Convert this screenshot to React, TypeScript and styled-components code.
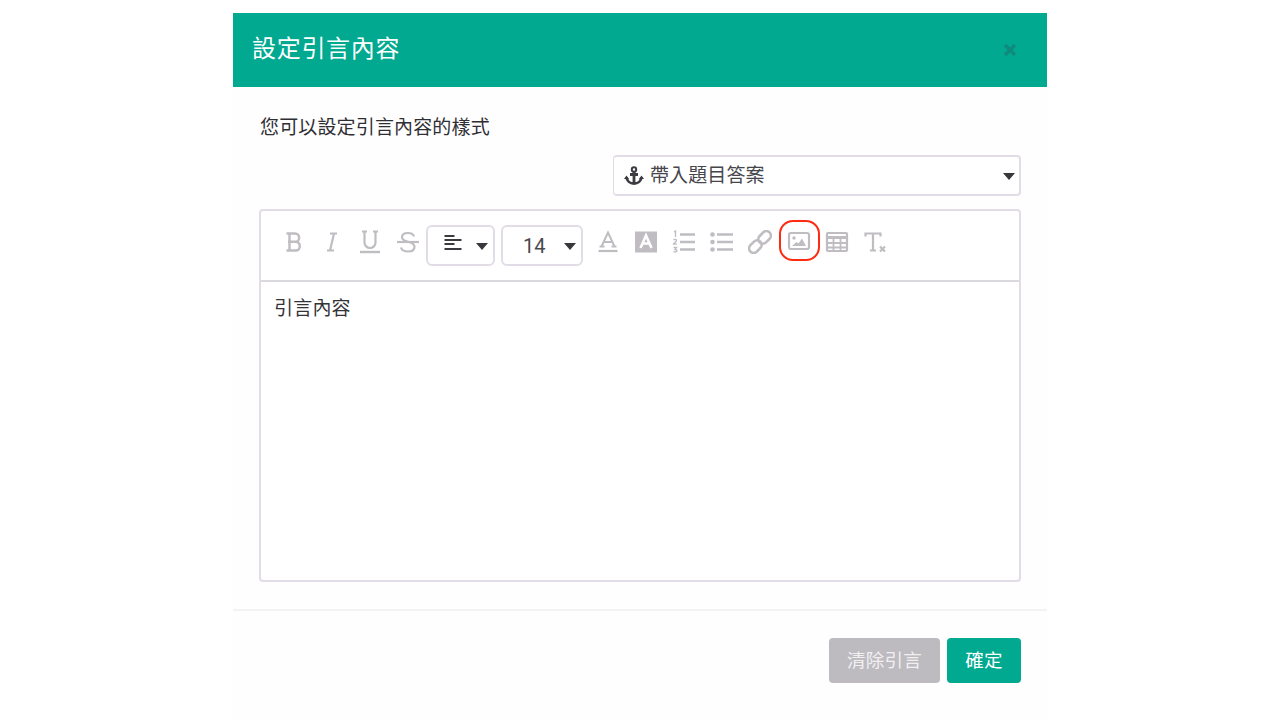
import React from "react";
import styled, { createGlobalStyle } from "styled-components";

const Global = createGlobalStyle`
  html, body { margin: 0; padding: 0; background: #ffffff; }
  body { font-family: Roboto, "Noto Sans CJK TC", sans-serif; }
  * { box-sizing: border-box; }
`;
const Page = styled.div`
  width: 1280px; height: 720px; overflow: hidden; padding-top: 13px;
  display: flex; justify-content: center; align-items: flex-start;
`;
const Modal = styled.div`
  width: 814px; height: 707px; background: #fffeff; display: flex; flex-direction: column;
`;
const Header = styled.div`
  height: 74px; background: #00a98f; flex: none; display: flex; align-items: center;
  justify-content: space-between; padding: 0 30px 2px 19px;
`;
const Title = styled.div`
  color: #fff; font-size: 24px; line-height: 30px; font-weight: 400;
  font-family: Roboto, "Noto Sans CJK TC", sans-serif; letter-spacing: 0.7px;
`;
const CloseIcon = styled.svg`
  width: 14px; height: 14px; margin-top: 2px; display: block;
`;
const Body = styled.div`
  flex: none; height: 524px; padding: 29px 26px 0; display: flex; flex-direction: column;
  border-bottom: 2px solid #f4f2f4;
`;
const Hint = styled.div`
  font-size: 19px; line-height: 24px; color: #2f2f33; height: 24px; letter-spacing: 0.15px;
  padding-left: 1px;
`;
const SelectRow = styled.div`
  display: flex; justify-content: flex-end; margin-top: 15px;
`;
const AnswerSelect = styled.div`
  width: 408px; height: 41px; border: 2px solid #e2dce6; border-left-width: 1px; border-radius: 4px;
  background: #fff; display: flex; align-items: center; padding: 0 4px 0 10px; gap: 6px;
  color: #46464c; font-size: 19px;
`;
const SelectText = styled.span`
  flex: 1; line-height: 24px; letter-spacing: 0.1px;
`;
const Caret = styled.span`
  flex: none; width: 0; height: 0;
  border-left: 6.5px solid transparent; border-right: 6.5px solid transparent;
  border-top: 7px solid #37373c; margin-top: 2px;
`;
const Editor = styled.div`
  margin-top: 13px; width: 762px; height: 373px; border: 2px solid #e2dce6; border-radius: 4px;
  background: #fff; display: flex; flex-direction: column;
`;
const Toolbar = styled.div`
  height: 71px; flex: none; border-bottom: 2px solid #dcd9de; display: flex; align-items: center;
  padding: 0 0 8px 21px;
`;
const ToolIcon = styled.svg<{ $mr?: number }>`
  width: 24px; height: 24px; flex: none; display: block; fill: none; stroke: #bfbcc2;
  margin-right: ${(p) => p.$mr ?? 14}px;
`;
const Dropdown = styled.div<{ $w: number; $mr: number }>`
  width: ${(p) => p.$w}px; height: 41px; margin-right: ${(p) => p.$mr}px; flex: none;
  border: 2px solid #e2dce6; border-radius: 6px; display: flex; align-items: center;
  justify-content: space-between; padding: 0 5px 0 16px; margin-top: 7px; background: #fff;
`;
const AlignIcon = styled.svg`
  width: 18px; height: 18px; display: block; flex: none; margin-bottom: 4px;
`;
const SizeLabel = styled.span`
  font-size: 20px; color: #48484d; margin-left: 4px; line-height: 24px; padding-top: 2px;
`;
const HighlightRing = styled.div`
  width: 41px; height: 41px; border: 2px solid #ff2a12; border-radius: 14px; flex: none;
  display: flex; align-items: center; justify-content: center; margin: 0 5px 2px -7px;
  padding: 0 2px 0 0;
`;
const InnerIcon = styled.svg`
  width: 24px; height: 24px; display: block; fill: none; stroke: #bfbcc2;
`;
const AnchorIcon = styled.svg`
  width: 20px; height: 20px; flex: none; display: block;
`;
const Content = styled.div`
  padding: 15px 13px; font-size: 19px; line-height: 24px; color: #333337; letter-spacing: 0.2px;
`;
const Footer = styled.div`
  flex: 1; display: flex; justify-content: flex-end; align-items: flex-start;
  padding: 27px 26px 0 0; gap: 7px;
`;
const Button = styled.button<{ $muted?: boolean }>`
  height: 45px; border: 0; border-radius: 4px; color: ${(p) => (p.$muted ? "#f1eff2" : "#fff")};
  background: ${(p) => (p.$muted ? "#bdbbbf" : "#00a98f")}; padding: 0 0 3px; font-size: 18.5px;
  font-family: Roboto, "Noto Sans CJK TC", sans-serif; letter-spacing: 0.3px;
  width: ${(p) => (p.$muted ? "111px" : "74px")};
`;

export default function App() {
  return (
    <Page>
      <Global />
      <Modal>
        <Header>
          <Title>設定引言內容</Title>
          <CloseIcon viewBox="0 0 14 14">
            <path d="M2 2l10 10M12 2L2 12" stroke="#108a7c" strokeWidth="3.2" />
          </CloseIcon>
        </Header>
        <Body>
          <Hint>您可以設定引言內容的樣式</Hint>
          <SelectRow>
            <AnswerSelect>
              <AnchorIcon viewBox="0 0 20 20">
                <circle cx="10" cy="3.500" r="2.200" fill="none" stroke="#3c3c42" strokeWidth="2" />
                <path d="M10 5.500v12M6 8.500h8" stroke="#3c3c42" strokeWidth="2.800" fill="none" />
                <path d="M2.500 11c.3 3.800 3.500 6.500 7.500 6.500s7.200-2.700 7.500-6.500" stroke="#3c3c42" strokeWidth="2.800" fill="none" />
                <path d="M0 13l2.500-3.500L5 13zM15 13l2.500-3.500L20 13z" fill="#3c3c42" />
              </AnchorIcon>
              <SelectText>帶入題目答案</SelectText>
              <Caret />
            </AnswerSelect>
          </SelectRow>
          <Editor>
            <Toolbar>
              <ToolIcon viewBox="0 0 24 24" $mr={14}>
                <path d="M6 3.500h7a4 4 0 0 1 0 8.300H6M6 11.800h8a4.400 4.400 0 0 1 0 8.700H6M7.500 3.500v17M4.500 3.500h3M4.500 20.500h3" strokeWidth={2.400} />
              </ToolIcon>
              <ToolIcon viewBox="0 0 24 24" $mr={14}>
                <path d="M10 3.500h7M7 20.500h7M14 3.500l-4 17" strokeWidth={2.200} />
              </ToolIcon>
              <ToolIcon viewBox="0 0 24 24" $mr={14}>
                <path d="M6.500 1.500v11a5.500 5.500 0 0 0 11 0v-11M4 1.500h5M15 1.500h5" strokeWidth={2.200} />
                <path d="M2 22h20" strokeWidth={2.400} />
              </ToolIcon>
              <ToolIcon viewBox="0 0 24 24" $mr={6}>
                <path d="M18 6.500c-.5-2-2.800-3.500-6-3.500-3.500 0-6 1.600-6 4.200 0 2.400 2 3.500 6 4.500 4 1 6.500 2.300 6.500 5 0 3-2.700 4.800-6.500 4.800-3.600 0-6.300-1.500-7-4" strokeWidth={2.200} />
                <path d="M1 12h22" strokeWidth={2.200} />
              </ToolIcon>
              <Dropdown $w={69} $mr={6}>
                <AlignIcon viewBox="0 0 18 18">
                  <path d="M0.500 2h10M0.500 6h17M0.500 10h10M0.500 15h17" stroke="#3a3a3f" strokeWidth="2" />
                </AlignIcon>
                <Caret />
              </Dropdown>
              <Dropdown $w={82} $mr={13}>
                <SizeLabel>14</SizeLabel>
                <Caret />
              </Dropdown>
              <ToolIcon viewBox="0 0 24 24" $mr={14}>
                <path d="M5.500 16.500L12 2.500l6.500 14M7.500 12h9M3.500 16.500h5M15.500 16.500h5" strokeWidth={2} />
                <path d="M2.500 21h19" strokeWidth={2.200} />
              </ToolIcon>
              <ToolIcon viewBox="0 0 24 24" $mr={14}>
                <rect x="1" y="1.500" width="22" height="21" fill="#bfbcc2" stroke="none" />
                <path d="M6.500 18L12 5.500 17.500 18M8.500 13.500h7" stroke="#fff" strokeWidth={2.600} />
              </ToolIcon>
              <ToolIcon viewBox="0 0 24 24" $mr={14}>
                <path d="M8 4.500h15M8 12h15M8 19.500h15" strokeWidth={2.500} />
                <path d="M2 2l1.500-1v6M1.500 10c1-1 3-.8 3 .6 0 1-2.500 2-3 3.400h3.200M1.500 17.500h3l-1.500 2c1.500 0 2 .6 2 1.300 0 1.200-2.300 1.500-3.500.7" strokeWidth={1.300} />
              </ToolIcon>
              <ToolIcon viewBox="0 0 24 24" $mr={14}>
                <path d="M7 4.500h16M7 12h16M7 19.500h16" strokeWidth={2.500} />
                <circle cx="2.500" cy="4.500" r="2.300" fill="#bfbcc2" stroke="none" />
                <circle cx="2.500" cy="12" r="2.300" fill="#bfbcc2" stroke="none" />
                <circle cx="2.500" cy="19.500" r="2.300" fill="#bfbcc2" stroke="none" />
              </ToolIcon>
              <ToolIcon viewBox="0 0 24 24" $mr={14}>
                <g transform="rotate(-45 12 12)" strokeWidth={2.600}>
                  <rect x="-1.500" y="7.500" width="14" height="9" rx="4.500" />
                  <rect x="11.500" y="7.500" width="14" height="9" rx="4.500" />
                </g>
              </ToolIcon>
              <HighlightRing>
                <InnerIcon viewBox="0 0 24 24">
                  <rect x="2" y="4" width="20" height="16" rx="2" strokeWidth={2.200} />
                  <circle cx="7" cy="9" r="1.700" fill="#bfbcc2" stroke="none" />
                  <path d="M5 17l4.500-4 2 1.500 3.500-5 4 7.500z" fill="#bfbcc2" stroke="none" />
                </InnerIcon>
              </HighlightRing>
              <ToolIcon viewBox="0 0 24 24" $mr={14}>
                <rect x="2" y="3" width="20" height="18" rx="1" strokeWidth={2.200} />
                <path d="M2 7.500h20" strokeWidth={3} />
                <path d="M2 13h20M2 17.500h20M8.500 8v13M15.500 8v13" strokeWidth={1.800} />
              </ToolIcon>
              <ToolIcon viewBox="0 0 24 24">
                <path d="M2.500 6.500V3.500h15v3M10 3.500v17M7 20.500h6" strokeWidth={2.200} />
                <path d="M17 16.500l5 5M22 16.500l-5 5" strokeWidth={2.200} />
              </ToolIcon>
            </Toolbar>
            <Content>引言內容</Content>
          </Editor>
        </Body>
        <Footer>
          <Button $muted>清除引言</Button>
          <Button>確定</Button>
        </Footer>
      </Modal>
    </Page>
  );
}
